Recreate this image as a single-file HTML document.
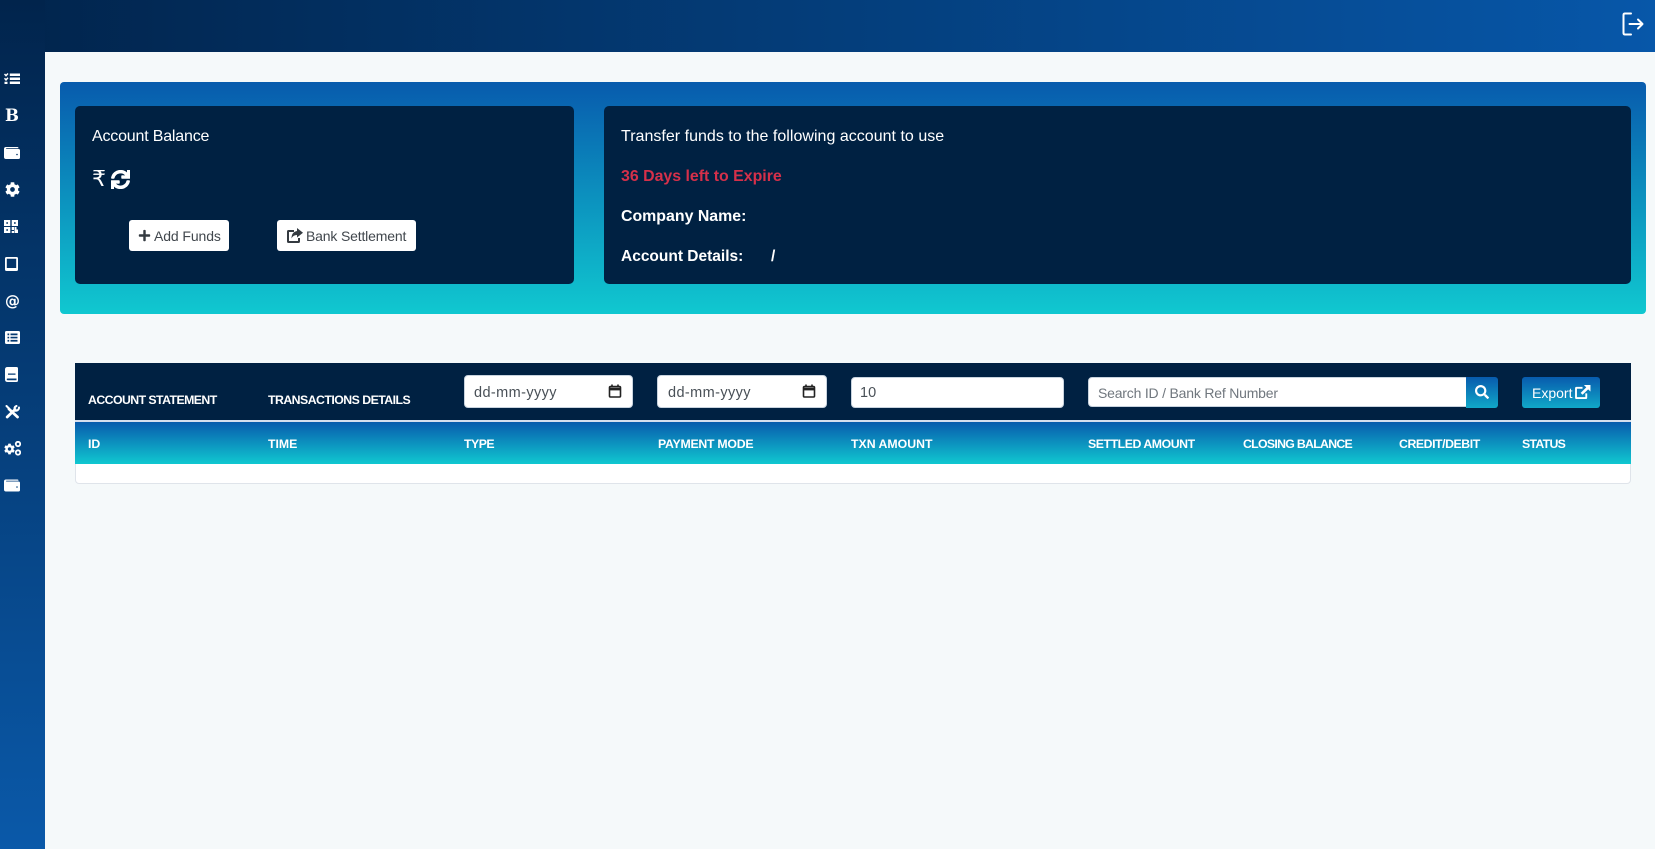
<!DOCTYPE html>
<html lang="en">
<head>
<meta charset="utf-8">
<title>Account Statement</title>
<style>
*{box-sizing:border-box}
html,body{margin:0;padding:0;width:1655px;height:849px;overflow:hidden;background:#f5f9fa;font-family:"Liberation Sans",sans-serif}
.a{position:absolute}
.t{position:absolute;white-space:nowrap;line-height:1}
#top{left:0;top:0;width:1655px;height:52px;background:linear-gradient(90deg,#01244c 0%,#0757a9 100%)}
#side{left:0;top:0;width:45px;height:849px;background:linear-gradient(180deg,#01244c 0%,#0a59a9 100%)}
#hero{left:60px;top:82px;width:1586px;height:232px;border-radius:4px;background:linear-gradient(180deg,#085bad 0%,#10c8d0 100%)}
.card{position:absolute;top:106px;height:178px;background:#002142;border-radius:5px}
.w{color:#fff;font-size:16px}
.b{font-weight:bold}
.btn{position:absolute;top:220px;height:31px;background:#fff;border-radius:3px}
.th{position:absolute;color:#fff;font-size:12.3px;font-weight:bold;white-space:nowrap;line-height:1}
.inp{position:absolute;background:#fff;border:1px solid #c8d3de;border-radius:4px}
svg{position:absolute;fill:#fff;display:block}
</style>
</head>
<body>
<div class="a" id="top"></div>
<div class="a" id="side"></div>

<!-- logout -->
<svg style="left:1622px;top:12px;fill:none;stroke:#fff;stroke-width:2;stroke-linecap:round;stroke-linejoin:round" width="22" height="24" viewBox="0 0 22 24"><path d="M9 1.500H3Q1.500 1.500 1.500 3V21Q1.500 22.500 3 22.500H9"/><path d="M7.500 12H20.500M16 7.500L20.500 12L16 16.500"/></svg>

<!-- sidebar icons -->
<svg style="left:4px;top:73px" width="16" height="11" viewBox="0 0 16 11"><path d="M0 1.500l1-1 1 1 1.500-1.500 1 1-2.500 2.800zM0 5.800l1-1 1 1 1.500-1.500 1 1-2.500 2.800zM.5 8.700h3V11h-3zM5.800.5H16V3H5.800zM5.800 4.500H16V7H5.800zM5.800 8.500H16V11H5.800z"/></svg>
<div class="t" style="left:5px;top:107px;font:bold 16.500px 'DejaVu Serif',serif;color:#fff;line-height:17px">B</div>
<svg style="left:4px;top:147px" width="16" height="12" viewBox="0 0 16 12"><path d="M2 0H13.500Q14.500 0 14.500 1.200H2.500Q2 1.200 2 1.500Q2 2 2.500 2H14.500Q16 2 16 3.500V10.500Q16 12 14.500 12H2Q0 12 0 10V2Q0 0 2 0Z"/><circle cx="13" cy="7.500" r=".8" fill="#023166"/></svg>
<svg style="left:5px;top:182px" width="15" height="15" viewBox="0 0 512 512"><path d="M487.4 315.7l-42.6-24.6c4.3-23.2 4.3-47 0-70.2l42.6-24.6c4.9-2.8 7.100-8.600 5.500-14-11.100-35.600-30-67.800-54.700-94.600-3.800-4.100-10-5.100-14.800-2.300L380.800 110c-17.900-15.400-38.500-27.300-60.800-35.100V25.800c0-5.600-3.900-10.500-9.400-11.700-36.700-8.200-74.300-7.800-109.200 0-5.500 1.200-9.400 6.100-9.400 11.700V75c-22.200 7.900-42.800 19.800-60.800 35.100L88.700 85.500c-4.900-2.800-11-1.900-14.800 2.300-24.700 26.700-43.600 58.900-54.700 94.600-1.700 5.400.6 11.200 5.500 14L67.300 221c-4.300 23.200-4.300 47 0 70.200l-42.600 24.600c-4.900 2.800-7.100 8.600-5.500 14 11.100 35.600 30 67.800 54.700 94.600 3.800 4.100 10 5.100 14.800 2.300l42.600-24.600c17.900 15.400 38.500 27.300 60.800 35.100v49.200c0 5.600 3.900 10.500 9.400 11.700 36.700 8.200 74.300 7.800 109.200 0 5.500-1.200 9.400-6.100 9.400-11.700v-49.200c22.200-7.900 42.800-19.800 60.800-35.100l42.600 24.600c4.900 2.800 11 1.900 14.800-2.300 24.700-26.700 43.600-58.900 54.700-94.600 1.500-5.500-.7-11.300-5.600-14.100zM256 336c-44.100 0-80-35.900-80-80s35.900-80 80-80 80 35.900 80 80-35.900 80-80 80z"/></svg>
<svg style="left:4px;top:220px" width="14" height="13" viewBox="0 0 14 13"><path fill-rule="evenodd" d="M0 0H6.300V6H0zM2.300 2.200V3.800H4V2.200zM7.700 0H14V6H7.700zM10 2.200V3.800H11.700V2.200zM0 7H6.300V13H0zM2.300 9.200V10.800H4V9.200zM7.700 7H10V10H7.700zM7.700 11H10V13H7.700zM10.500 7H12.500V9.500H14V13H10.500z"/></svg>
<svg style="left:5px;top:257px" width="13" height="14" viewBox="0 0 13 14"><path fill-rule="evenodd" d="M1.500 0H11.500Q13 0 13 1.500V12.500Q13 14 11.500 14H1.500Q0 14 0 12.500V1.500Q0 0 1.500 0ZM1.800 1.800V11H11.200V1.800Z"/></svg>
<div class="t" style="left:5px;top:293px;font:bold 15px 'DejaVu Sans',sans-serif;color:#fff;line-height:16px">@</div>
<svg style="left:5px;top:331px" width="15" height="13" viewBox="0 0 15 13"><path fill-rule="evenodd" d="M1.500 0H13.500Q15 0 15 1.500V11.500Q15 13 13.500 13H1.500Q0 13 0 11.500V1.500Q0 0 1.500 0ZM2.500 2.500V4.200H4.200V2.500ZM5.500 2.500V4.200H12.500V2.500ZM2.500 5.700V7.400H4.200V5.700ZM5.500 5.700V7.400H12.500V5.700ZM2.500 8.900V10.600H4.200V8.900ZM5.500 8.900V10.600H12.500V8.900Z"/></svg>
<svg style="left:5px;top:367px" width="13" height="15" viewBox="0 0 13 15"><path fill-rule="evenodd" d="M2.500 0H11.500Q13 0 13 1.500V13.500Q13 15 11.500 15H2.500Q0 15 0 12.500V2.500Q0 0 2.500 0ZM3 6.500V7.800H10.500V6.500ZM2.500 11.500Q1.700 11.500 1.700 12.300Q1.700 13.200 2.500 13.200H11.500V11.500Z"/></svg>
<svg style="left:5px;top:405px;fill:none;stroke:#fff;stroke-linecap:round" width="15" height="14" viewBox="0 0 15 14"><path d="M2.200 12L10 4.500" stroke-width="2.800"/><path d="M4 4L12.500 12" stroke-width="2.800"/><path d="M1.500 1L4 3.500" stroke-width="2"/><path d="M14 2.500A3 3 0 0 1 10 5.500" stroke-width="2"/><path d="M11.500 1A3 3 0 0 0 9.500 4" stroke-width="2"/></svg>
<svg style="left:4px;top:441px" width="17" height="15" viewBox="0 0 17 15"><g transform="translate(0 2.500) scale(.0215)"><path d="M487.400 315.700l-42.600-24.600c4.300-23.200 4.300-47 0-70.200l42.600-24.600c4.900-2.800 7.100-8.600 5.500-14-11.100-35.600-30-67.800-54.700-94.600-3.800-4.100-10-5.100-14.800-2.300L380.800 110c-17.900-15.400-38.500-27.300-60.800-35.100V25.800c0-5.600-3.900-10.500-9.400-11.700-36.700-8.200-74.300-7.800-109.200 0-5.500 1.200-9.400 6.100-9.400 11.700V75c-22.200 7.900-42.800 19.800-60.800 35.100L88.700 85.500c-4.900-2.800-11-1.900-14.800 2.300-24.700 26.700-43.600 58.900-54.700 94.600-1.700 5.400.6 11.200 5.500 14L67.300 221c-4.300 23.200-4.300 47 0 70.200l-42.600 24.600c-4.900 2.800-7.100 8.600-5.500 14 11.100 35.600 30 67.800 54.700 94.600 3.800 4.100 10 5.100 14.800 2.300l42.600-24.600c17.900 15.400 38.500 27.300 60.800 35.100v49.200c0 5.600 3.900 10.500 9.400 11.700 36.700 8.200 74.300 7.800 109.200 0 5.500-1.200 9.400-6.100 9.400-11.700v-49.200c22.200-7.900 42.800-19.800 60.800-35.100l42.600 24.600c4.900 2.800 11 1.900 14.800-2.300 24.700-26.700 43.600-58.900 54.700-94.600 1.500-5.500-.7-11.300-5.600-14.100zM256 336c-44.100 0-80-35.900-80-80s35.900-80 80-80 80 35.900 80 80-35.900 80-80 80z"/></g><circle cx="14" cy="3" r="2.200" fill="none" stroke="#fff" stroke-width="1.800"/><circle cx="14" cy="11.500" r="2.200" fill="none" stroke="#fff" stroke-width="1.800"/></svg>
<svg style="left:4px;top:479px" width="16" height="13" viewBox="0 0 16 12"><path d="M2 0H13.500Q14.500 0 14.500 1.200H2.500Q2 1.200 2 1.500Q2 2 2.500 2H14.500Q16 2 16 3.500V10.500Q16 12 14.500 12H2Q0 12 0 10V2Q0 0 2 0Z"/><circle cx="13" cy="7.500" r=".8" fill="#04427f"/></svg>

<!-- hero -->
<div class="a" id="hero"></div>
<div class="card" style="left:75px;width:499px"></div>
<div class="card" style="left:604px;width:1027px"></div>

<div class="t w" style="left:92px;top:129px;letter-spacing:-.19px">Account Balance</div>
<div class="t" style="left:92px;top:167px;font:22px 'Liberation Sans','DejaVu Sans',sans-serif;color:#fff;line-height:24px">₹</div>
<svg style="left:111px;top:170px" width="19" height="19" viewBox="0 0 512 512"><path stroke="#fff" stroke-width="22" d="M440.650 12.570l4 82.770A247.160 247.160 0 0 0 255.830 8C134.730 8 33.910 94.920 12.290 209.820A12 12 0 0 0 24.090 224h49.050a12 12 0 0 0 11.670-9.260 175.910 175.910 0 0 1 317-56.940l-101.460-4.860a12 12 0 0 0-12.570 12v47.410a12 12 0 0 0 12 12H500a12 12 0 0 0 12-12V12a12 12 0 0 0-12-12h-47.370a12 12 0 0 0-11.980 12.570zM255.830 432a175.610 175.610 0 0 1-146-77.800l101.800 4.870a12 12 0 0 0 12.570-12v-47.400a12 12 0 0 0-12-12H12a12 12 0 0 0-12 12V500a12 12 0 0 0 12 12h47.350a12 12 0 0 0 12-12.600l-4.150-82.570A247.170 247.170 0 0 0 255.830 504c121.110 0 221.930-86.920 243.550-201.820a12 12 0 0 0-11.800-14.180h-49.050a12 12 0 0 0-11.670 9.260A175.860 175.860 0 0 1 255.830 432z"/></svg>

<div class="btn" style="left:129px;width:100px"></div>
<svg style="left:138px;top:229px;fill:#343a40" width="13" height="13" viewBox="0 0 448 512"><path d="M416 208H272V64c0-17.670-14.330-32-32-32h-32c-17.670 0-32 14.330-32 32v144H32c-17.670 0-32 14.330-32 32v32c0 17.670 14.330 32 32 32h144v144c0 17.670 14.330 32 32 32h32c17.670 0 32-14.330 32-32V304h144c17.670 0 32-14.330 32-32v-32c0-17.670-14.330-32-32-32z"/></svg>
<div class="t" style="left:154px;top:229px;font-size:14px;color:#41474d;letter-spacing:-.1px">Add Funds</div>

<div class="btn" style="left:277px;width:139px"></div>
<svg style="left:287px;top:228px;fill:#343a40" width="16" height="15" viewBox="0 0 16 15"><path fill-rule="evenodd" d="M1.500 2H7V4H2V13H11V10H13V13.500Q13 15 11.500 15H1.500Q0 15 0 13.500V3.500Q0 2 1.500 2Z"/><path d="M10 0L16 4.800L10 9.500V7Q6 7 4.500 10.500Q4.500 4 10 3Z"/></svg>
<div class="t" style="left:306px;top:229px;font-size:14px;color:#41474d;letter-spacing:-.17px">Bank Settlement</div>

<div class="t w" style="left:621px;top:129px;letter-spacing:.02px">Transfer funds to the following account to use</div>
<div class="t b" style="left:621px;top:169px;font-size:15.900px;color:#d5304a">36 Days left to Expire</div>
<div class="t w b" style="left:621px;top:209px;font-size:15.900px">Company Name:</div>
<div class="t w b" style="left:621px;top:249px;font-size:15.500px">Account Details:</div>
<div class="t w b" style="left:771px;top:249px;font-size:15.500px">/</div>

<!-- table -->
<div class="a" style="left:75px;top:363px;width:1556px;height:121px;background:#fff;border:1px solid #dfe4ea;border-radius:0 0 4px 4px"></div>
<div class="a" style="left:75px;top:363px;width:1556px;height:57px;background:#002142"></div>
<div class="a" style="left:75px;top:420px;width:1556px;height:2px;background:#d6deee"></div>
<div class="a" style="left:75px;top:422px;width:1556px;height:42px;background:linear-gradient(180deg,#085bad 0%,#10c8d0 100%)"></div>

<div class="th" style="left:88px;top:394px;letter-spacing:-.56px">ACCOUNT STATEMENT</div>
<div class="th" style="left:268px;top:394px;letter-spacing:-.53px">TRANSACTIONS DETAILS</div>

<div class="inp" style="left:464px;top:375px;width:169px;height:33px"></div>
<div class="t" style="left:474px;top:386px;font-size:14.500px;color:#495057;letter-spacing:.4px">dd-mm-yyyy</div>
<svg style="left:608px;top:384px;fill:none;stroke:#222;stroke-width:1.600" width="14" height="14" viewBox="0 0 14 14"><rect x="1.500" y="2.500" width="11" height="10.500" rx="1"/><path d="M1.500 5H12.500" stroke-width="2.800"/><path d="M4 .5V3M10 .5V3"/></svg>

<div class="inp" style="left:657px;top:375px;width:170px;height:33px"></div>
<div class="t" style="left:668px;top:386px;font-size:14.500px;color:#495057;letter-spacing:.4px">dd-mm-yyyy</div>
<svg style="left:802px;top:384px;fill:none;stroke:#222;stroke-width:1.600" width="14" height="14" viewBox="0 0 14 14"><rect x="1.500" y="2.500" width="11" height="10.500" rx="1"/><path d="M1.500 5H12.500" stroke-width="2.800"/><path d="M4 .5V3M10 .5V3"/></svg>

<div class="inp" style="left:851px;top:377px;width:213px;height:31px"></div>
<div class="t" style="left:860px;top:386px;font-size:14.500px;color:#495057">10</div>

<div class="inp" style="left:1088px;top:377px;width:379px;height:30px;border-radius:4px 0 0 4px"></div>
<div class="t" style="left:1098px;top:386px;font-size:14px;color:#70777e;letter-spacing:-.2px">Search ID / Bank Ref Number</div>
<div class="a" style="left:1466px;top:377px;width:32px;height:31px;border-radius:0 3px 3px 0;background:linear-gradient(180deg,#085bad,#10a8c8)"></div>
<svg style="left:1475px;top:385px" width="14" height="14" viewBox="0 0 512 512"><path d="M505 442.700L405.300 343c-4.500-4.500-10.600-7-17-7H372c27.600-35.300 44-79.700 44-128C416 93.100 322.900 0 208 0S0 93.100 0 208s93.100 208 208 208c48.300 0 92.700-16.400 128-44v16.300c0 6.400 2.500 12.500 7 17l99.700 99.700c9.400 9.400 24.600 9.400 33.900 0l28.300-28.300c9.400-9.400 9.400-24.600.1-34zM208 336c-70.700 0-128-57.200-128-128 0-70.700 57.200-128 128-128 70.700 0 128 57.200 128 128 0 70.700-57.200 128-128 128z"/></svg>

<div class="a" style="left:1522px;top:377px;width:78px;height:31px;border-radius:3px;background:linear-gradient(180deg,#085bad,#10a8c8)"></div>
<div class="t" style="left:1532px;top:386px;font-size:14px;color:#fff">Export</div>
<svg style="left:1575px;top:385px" width="16" height="14" viewBox="0 0 17 15"><path fill-rule="evenodd" d="M1.500 2H8V4H2V13H11V9H13V13.500Q13 15 11.500 15H1.500Q0 15 0 13.500V3.500Q0 2 1.500 2Z"/><path d="M9.500 0H16.500V7L14 4.700L8 10.500L6 8.500L12 2.500Z"/></svg>

<div class="th" style="left:88px;top:438px">ID</div>
<div class="th" style="left:268px;top:438px">TIME</div>
<div class="th" style="left:464px;top:438px;letter-spacing:-.5px">TYPE</div>
<div class="th" style="left:658px;top:438px;letter-spacing:-.26px">PAYMENT MODE</div>
<div class="th" style="left:851px;top:438px">TXN AMOUNT</div>
<div class="th" style="left:1088px;top:438px;letter-spacing:-.45px">SETTLED AMOUNT</div>
<div class="th" style="left:1243px;top:438px;letter-spacing:-.7px">CLOSING BALANCE</div>
<div class="th" style="left:1399px;top:438px;letter-spacing:-.44px">CREDIT/DEBIT</div>
<div class="th" style="left:1522px;top:438px;letter-spacing:-.7px">STATUS</div>
</body>
</html>
